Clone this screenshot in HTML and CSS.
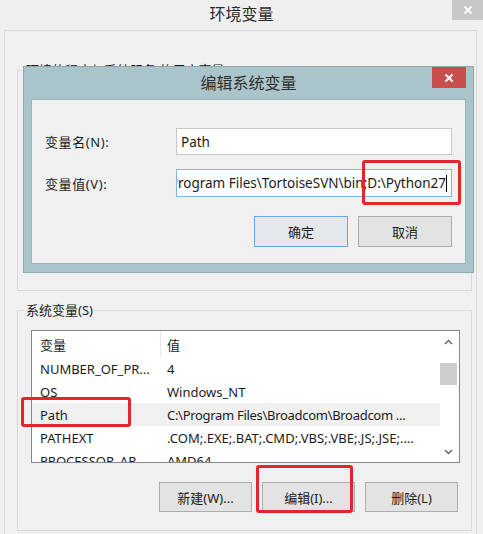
FILE: index.html
```html
<!DOCTYPE html>
<html lang="zh-CN">
<head>
<meta charset="utf-8">
<title>环境变量</title>
<link rel="stylesheet" href="styles.css">
</head>
<body>
<div class="window">
  <div class="titlebar">
    <span class="tb-spacer"></span>
    <div class="tb-title">环境变量</div>
    <div class="tb-close">
      <svg width="10" height="10" viewBox="0 0 10 10"><path d="M1.5 1.5L8.5 8.5M8.5 1.5L1.5 8.5" stroke="#fff" stroke-width="1.8" fill="none"/></svg>
    </div>
  </div>
  <div class="client">
    <fieldset class="group group-user">
      <legend>环境的程序与系统服务 的用户变量(U)</legend>
      <div class="user-body"></div>
    </fieldset>
    <fieldset class="group group-sys">
      <legend>系统变量(S)</legend>
      <div class="listbox">
        <div class="list-main">
          <div class="lrow lhead"><div class="c1">变量</div><div class="c2">值</div></div>
          <div class="lrow"><div class="c1">NUMBER_OF_PR...</div><div class="c2">4</div></div>
          <div class="lrow"><div class="c1">OS</div><div class="c2">Windows_NT</div></div>
          <div class="lrow sel"><div class="c1">Path</div><div class="c2 tight">C:\Program Files\Broadcom\Broadcom ...</div></div>
          <div class="lrow"><div class="c1">PATHEXT</div><div class="c2">.COM;.EXE;.BAT;.CMD;.VBS;.VBE;.JS;.JSE;....</div></div>
          <div class="lrow"><div class="c1">PROCESSOR_AR...</div><div class="c2">AMD64</div></div>
        </div>
        <div class="vscroll">
          <div class="sb-btn sb-up">
            <svg width="9" height="6" viewBox="0 0 9 6"><path d="M1 5L4.5 1.5L8 5" stroke="#606060" stroke-width="1.4" fill="none"/></svg>
          </div>
          <div class="sb-track"><div class="sb-thumb"></div></div>
          <div class="sb-btn sb-down">
            <svg width="9" height="6" viewBox="0 0 9 6"><path d="M1 1L4.5 4.5L8 1" stroke="#606060" stroke-width="1.4" fill="none"/></svg>
          </div>
        </div>
      </div>
      <div class="btnrow">
        <button class="btn">新建(W)...</button>
        <button class="btn">编辑(I)...</button>
        <button class="btn">删除(L)</button>
      </div>
    </fieldset>
  </div>

  <div class="dialog">
    <div class="dlg-titlebar">
      <span class="dlg-spacer"></span>
      <div class="dlg-title">编辑系统变量</div>
      <div class="dlg-close">
        <svg width="10" height="10" viewBox="0 0 10 10"><path d="M1.5 1.5L8.5 8.5M8.5 1.5L1.5 8.5" stroke="#fff" stroke-width="2" fill="none"/></svg>
      </div>
    </div>
    <div class="dlg-client">
      <div class="field">
        <label class="field-label">变量名(N):</label>
        <div class="input"><span class="input-text">Path</span></div>
      </div>
      <div class="field">
        <label class="field-label">变量值(V):</label>
        <div class="input focused"><span class="input-text">C:\Program Files\TortoiseSVN\bin;D:\Python27</span><span class="caret"></span></div>
      </div>
      <div class="dlg-buttons">
        <button class="btn btn-dlg default">确定</button>
        <button class="btn btn-dlg">取消</button>
      </div>
    </div>
  </div>

  <div class="mark mark-value"></div>
  <div class="mark mark-path"></div>
  <div class="mark mark-edit"></div>
</div>
</body>
</html>
```
FILE: styles.css
```css
html, body {
  margin: 0;
  padding: 0;
}
body {
  font-family: "Noto Sans", "Noto Sans CJK SC", sans-serif;
  font-size: 13px;
  color: #1b1b1b;
  background: #efefef;
}
.window {
  width: 483px;
  height: 534px;
  background: #efefef;
  position: relative;
  overflow: hidden;
  display: flex;
  flex-direction: column;
}
.titlebar {
  height: 30px;
  display: flex;
  align-items: flex-start;
  flex-shrink: 0;
}
.tb-spacer {
  width: 31px;
}
.tb-title {
  flex: 1;
  text-align: center;
  font-size: 16px;
  line-height: 28px;
  color: #2b2b2b;
}
.tb-close {
  width: 31px;
  height: 20px;
  background: #c7c7c7;
  display: flex;
  align-items: center;
  justify-content: center;
}
.client {
  flex: 1;
  margin: 0 6px 0 4px;
  border: 1px solid #dadada;
  border-bottom: none;
  background: #f0f0f0;
  padding: 31px 4px 0 12px;
  display: flex;
  flex-direction: column;
}
.group {
  margin: 0;
  padding: 0 11px 0 13px;
  border: 1px solid #d9d9d9;
  min-width: 0;
}
.group legend {
  padding: 0 1px;
  margin-left: -6px;
  line-height: 17px;
  font-size: 13px;
  color: #1b1b1b;
}
.user-body {
  height: 211px;
}
.group-sys {
  margin-top: 11px;
  padding-top: 11px;
  padding-bottom: 18px;
}
.listbox {
  height: 133px;
  box-sizing: border-box;
  border: 1px solid #828790;
  background: #fff;
  display: flex;
}
.list-main {
  flex: 1;
  overflow: hidden;
}
.lrow {
  display: flex;
  height: 23px;
  align-items: center;
  white-space: nowrap;
}
.lhead {
  height: 26px;
  align-items: stretch;
}
.lhead .c1, .lhead .c2 {
  display: flex;
  align-items: center;
}
.c1 {
  width: 128px;
  flex-shrink: 0;
  padding-left: 8px;
  box-sizing: border-box;
  overflow: hidden;
}
.c2 {
  flex: 1;
  padding-left: 7px;
  overflow: hidden;
}
.c2.tight {
  letter-spacing: -0.3px;
}
.lhead .c2 {
  border-left: 1px solid #e8e8e8;
  padding-left: 6px;
}
.lrow.sel {
  background: #f0f0f0;
}
.vscroll {
  width: 19px;
  display: flex;
  flex-direction: column;
  background: #fff;
}
.sb-btn {
  display: flex;
  align-items: center;
  justify-content: center;
  padding-right: 2px;
}
.sb-up {
  height: 22px;
}
.sb-down {
  height: 20px;
}
.sb-track {
  flex: 1;
}
.sb-thumb {
  margin: 10px 2px 0 0;
  height: 22px;
  background: #cdcdcd;
}
.btnrow {
  display: flex;
  justify-content: flex-end;
  gap: 10px;
  margin-top: 19px;
  padding-right: 2px;
}
.btn {
  width: 93px;
  height: 30px;
  box-sizing: border-box;
  border: 1px solid #adadad;
  background: #e3e3e3;
  font-family: inherit;
  font-size: 13px;
  color: #1b1b1b;
  padding: 0;
  margin: 0;
}

/* edit dialog */
.dialog {
  position: absolute;
  left: 23px;
  top: 66px;
  width: 451px;
  height: 207px;
  box-sizing: border-box;
  border: 1px solid #8eaaae;
  background: #a9c5c9;
  padding: 0 7px 8px;
  display: flex;
  flex-direction: column;
}
.dlg-titlebar {
  height: 32px;
  display: flex;
  flex-shrink: 0;
}
.dlg-spacer {
  width: 34px;
}
.dlg-title {
  flex: 1;
  text-align: center;
  font-size: 16px;
  line-height: 32px;
  color: #2e2e2e;
}
.dlg-close {
  width: 34px;
  height: 21px;
  background: #c94f4f;
  display: flex;
  align-items: center;
  justify-content: center;
}
.dlg-client {
  flex: 1;
  border: 1px solid #9cb5b9;
  background: #f0f0f0;
  padding: 28px 13px 0 13px;
}
.field {
  display: flex;
  align-items: center;
  height: 27px;
}
.field + .field {
  margin-top: 14px;
  height: 28px;
}
.field-label {
  width: 131px;
  flex-shrink: 0;
  letter-spacing: 0.6px;
}
.input {
  flex: 1;
  height: 100%;
  box-sizing: border-box;
  border: 1px solid #c6c6c6;
  background: #fff;
  padding: 0 4px;
  display: flex;
  align-items: center;
  overflow: hidden;
  white-space: nowrap;
  font-size: 13.5px;
}
.input-text {
  flex-shrink: 0;
}
.input.focused {
  border-color: #84b5e6;
  justify-content: flex-end;
}
.caret {
  width: 1px;
  height: 17px;
  background: #000;
  flex-shrink: 0;
}
.dlg-buttons {
  display: flex;
  justify-content: flex-end;
  gap: 10px;
  margin-top: 19px;
}
.btn-dlg {
  width: 94px;
  height: 31px;
}
.btn.default {
  border-color: #6aa6df;
  background: #e5e8eb;
}

/* red annotation frames */
.mark {
  position: absolute;
  border: 3px solid #e3262b;
  border-radius: 3px;
  box-sizing: border-box;
}
.mark-value {
  left: 362px;
  top: 160px;
  width: 99px;
  height: 45px;
}
.mark-path {
  left: 21px;
  top: 397px;
  width: 110px;
  height: 30px;
}
.mark-edit {
  left: 256px;
  top: 465px;
  width: 97px;
  height: 48px;
}
```
